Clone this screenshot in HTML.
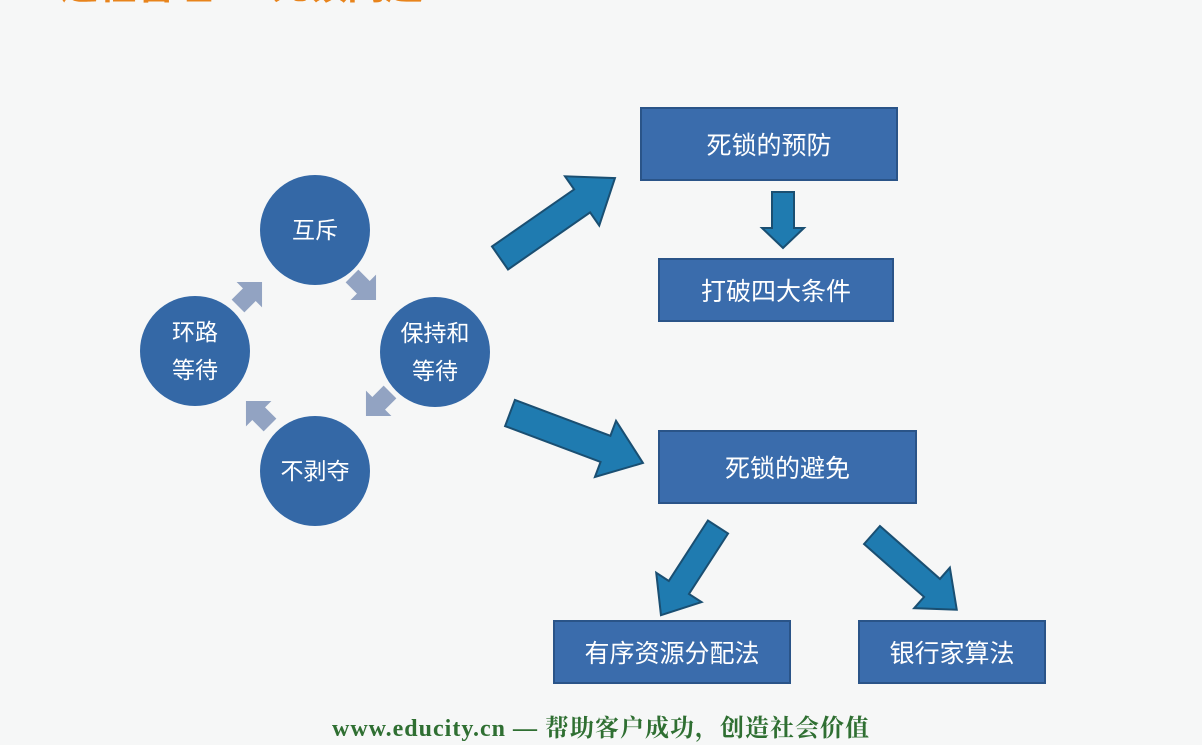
<!DOCTYPE html>
<html><head><meta charset="utf-8"><style>
body{margin:0;width:1202px;height:745px;overflow:hidden;background:#f6f7f7;font-family:"Liberation Sans","Noto Sans CJK SC",sans-serif;position:relative}
.t{position:absolute;left:18px;top:-45px;font-size:38px;font-weight:bold;color:#e8841c;white-space:nowrap}
.c{position:absolute;border-radius:50%;background:#3468a6;color:#fff;display:flex;align-items:center;justify-content:center;text-align:center;font-size:23px;line-height:38px}
.b{position:absolute;background:#3a6cac;border:2px solid #2a5488;box-sizing:border-box;color:#fff;display:flex;align-items:center;justify-content:center;font-size:25px}
.f{position:absolute;left:0;width:1202px;top:708px;text-align:center;font-family:"Liberation Serif","Noto Serif CJK SC",serif;font-weight:bold;font-size:24px;letter-spacing:1px;color:#2f6f32}
</style></head><body>
<div class="t">5. 进程管理 — 死锁问题</div>
<svg width="1202" height="745" style="position:absolute;left:0;top:0">
<g fill="#1f7bb0" stroke="#1a4f72" stroke-width="2">
<polygon transform="translate(500,258) rotate(-34.8)" points="0,-14 100,-14 100,-30 140,0 100,30 100,14 0,14"/>
<polygon transform="translate(510,413) rotate(20.6)" points="0,-14 102,-14 102,-30 142,0 102,30 102,14 0,14"/>
<polygon transform="translate(783,192) rotate(90)" points="0,-11 36,-11 36,-21 56,0 36,21 36,11 0,11"/>
<polygon transform="translate(718,527) rotate(122.9)" points="0,-12 72,-12 72,-27 105,0 72,27 72,12 0,12"/>
<polygon transform="translate(872,535) rotate(41.4)" points="0,-12 80,-12 80,-27 113,0 80,27 80,12 0,12"/>
</g>
<g fill="#92a3c2">
<polygon transform="translate(352,276) rotate(45)" points="0,-9 16,-9 16,-18 34,0 16,18 16,9 0,9"/>
<polygon transform="translate(390,392) rotate(135)" points="0,-9 16,-9 16,-18 34,0 16,18 16,9 0,9"/>
<polygon transform="translate(270,425) rotate(-135)" points="0,-9 16,-9 16,-18 34,0 16,18 16,9 0,9"/>
<polygon transform="translate(238,306) rotate(-45)" points="0,-9 16,-9 16,-18 34,0 16,18 16,9 0,9"/>
</g>
</svg>
<div class="c" style="left:260px;top:175px;width:110px;height:110px">互斥</div>
<div class="c" style="left:140px;top:296px;width:110px;height:110px">环路<br>等待</div>
<div class="c" style="left:380px;top:297px;width:110px;height:110px">保持和<br>等待</div>
<div class="c" style="left:260px;top:416px;width:110px;height:110px">不剥夺</div>
<div class="b" style="left:640px;top:107px;width:258px;height:74px">死锁的预防</div>
<div class="b" style="left:658px;top:258px;width:236px;height:64px">打破四大条件</div>
<div class="b" style="left:658px;top:430px;width:259px;height:74px">死锁的避免</div>
<div class="b" style="left:553px;top:620px;width:238px;height:64px">有序资源分配法</div>
<div class="b" style="left:858px;top:620px;width:188px;height:64px">银行家算法</div>
<div class="f">www.educity.cn — 帮助客户成功，创造社会价值</div>
</body></html>
